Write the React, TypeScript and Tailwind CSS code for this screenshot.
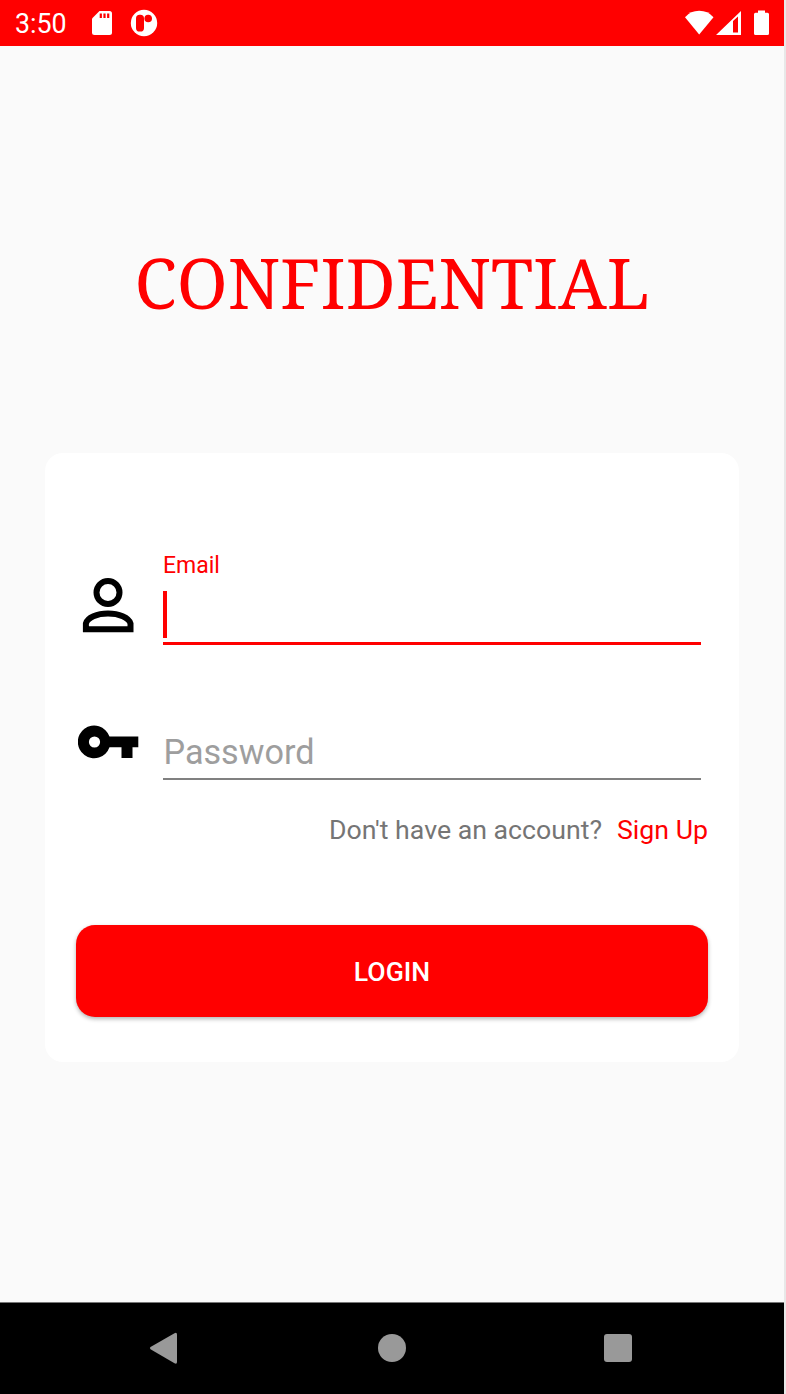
function StatusBar() {
  return (
    <header className="flex h-[46px] items-center bg-[#ff0000] pl-[15px] pr-[14px] text-white">
      <span className="w-[76px] pt-[1px] text-[26.800px] leading-[32px]">3:50</span>
      <svg className="h-[46px] w-[22px]" viewBox="91 0 22 46" fill="none">
        <path d="M99.500 11h10a2.500 2.500 0 0 1 2.500 2.500v19a2.500 2.500 0 0 1-2.500 2.500h-15a2.500 2.500 0 0 1-2.500-2.500V18.500z" fill="white" />
        <path d="M100.800 13.500v4.500M104.500 13.500v4.500M108.200 13.500v4.500" stroke="#ff0000" strokeWidth="2.200" />
      </svg>
      <svg className="ml-[17px] h-[46px] w-[28px]" viewBox="130 0 28 46">
        <circle cx="144" cy="23" r="13.200" fill="white" />
        <rect x="136" y="14.800" width="8" height="16.800" rx="3.700" fill="#ff0000" />
        <circle cx="148.200" cy="18.500" r="3.800" fill="#ff0000" />
      </svg>
      <svg className="ml-auto h-[46px] w-[86px]" viewBox="684 0 86 46" fill="white">
        <path d="M685 17.200Q690.500 10.800 699.200 10.800T713.500 17.200L699.200 34.500z" />
        <path fillRule="evenodd" d="M716 35L741 11V35zM733 21V32.500H738V16.500z" />
        <path d="M758 12.800V10.500H765V12.800H767.500Q769 12.800 769 14.300V33.500Q769 35 767.500 35H755.500Q754 35 754 33.500V14.300Q754 12.800 755.500 12.800z" />
      </svg>
    </header>
  );
}

function PersonIcon() {
  return (
    <svg className="h-[56px] w-[52px]" viewBox="82 577 52 56" fill="none" stroke="black" strokeWidth="6">
      <circle cx="108" cy="592.500" r="11.500" />
      <path d="M85.900 629.200V623.500C87.500 617.500 97 613.600 108 613.600S128.700 617.500 130.500 623.500V629.200z" />
    </svg>
  );
}

function KeyIcon() {
  return (
    <svg className="h-[34px] w-[62px]" viewBox="78 725 62 34">
      <path
        fillRule="evenodd"
        d="M109.500 736.500A16.300 16.300 0 1 0 109.500 747.300H121.500V758H132.500V747.300H138.300V736.500zM94.500 736.400a5.600 5.600 0 1 1 0 11.200a5.600 5.600 0 0 1 0-11.200"
      />
    </svg>
  );
}

function NavigationBar() {
  return (
    <nav className="flex h-[92px] items-center justify-between border-t border-[#777777] bg-black pb-[1px] pl-[149px] pr-[152px]">
      <svg className="h-[34px] w-[30px]" viewBox="149 1331 30 34" fill="#999999">
        <path d="M150.500 1347Q149.300 1348 150.500 1349.200L174.500 1363.300Q177 1364.500 177 1362V1334.500Q177 1332 174.500 1333.200z" />
      </svg>
      <span className="ml-[1px] size-[27.500px] rounded-full bg-[#999999]" />
      <span className="size-[28.500px] rounded-[3px] bg-[#999999]" />
    </nav>
  );
}

export default function App() {
  return (
    <div className="flex h-[1394px] w-[786px] bg-[#e8e8e8] font-[Roboto,sans-serif]">
      <div className="flex w-[784px] flex-col bg-[#fafafa]">
        <StatusBar />
        <main className="flex h-[1256px] flex-col items-center">
          <h1 className="mt-[192px] flex h-[90px] items-center justify-center whitespace-nowrap font-['Noto_Serif','DejaVu_Serif_Condensed','DejaVu_Serif',serif] text-[68.700px] leading-[90px] text-[#ff0000]">
            CONFIDENTIAL
          </h1>
          <form className="mt-[125px] flex h-[609px] w-[694px] flex-col rounded-[18px] bg-white px-[31px]">
            <div className="mt-[97px] flex h-[95px]">
              <div className="w-[87px] pl-[6px] pt-[27px]">
                <PersonIcon />
              </div>
              <label className="flex w-[538px] flex-col border-b-[3px] border-[#ff0000]">
                <span className="mt-[2px] text-[23px] leading-[28px] text-[#ff0000]">Email</span>
                <span className="mt-[11px] h-[47px] w-[4px] bg-[#ff0000]" />
              </label>
            </div>
            <div className="mt-[79px] flex h-[56px]">
              <div className="w-[87px] pl-[2px] pt-[1px]">
                <KeyIcon />
              </div>
              <label className="w-[538px] border-b-2 border-[#808080] pl-[0.500px] pt-[6px] text-[34.200px] leading-[44px] text-[#9e9e9e]">
                Password
              </label>
            </div>
            <p className="mt-[33px] flex h-[34px] items-center justify-end gap-[15px] whitespace-nowrap text-[26.700px] leading-[34px] text-[#757575]">
              <span>Don't have an account?</span>
              <a className="text-[#ff0000]">Sign Up</a>
            </p>
            <button
              type="button"
              className="mt-[78px] h-[92px] w-[632px] rounded-[19px] bg-[#ff0000] pt-[1px] text-[26.600px] font-medium text-white shadow-[0_2px_4px_rgba(0,0,0,0.3)]"
            >
              LOGIN
            </button>
          </form>
        </main>
        <NavigationBar />
      </div>
    </div>
  );
}
